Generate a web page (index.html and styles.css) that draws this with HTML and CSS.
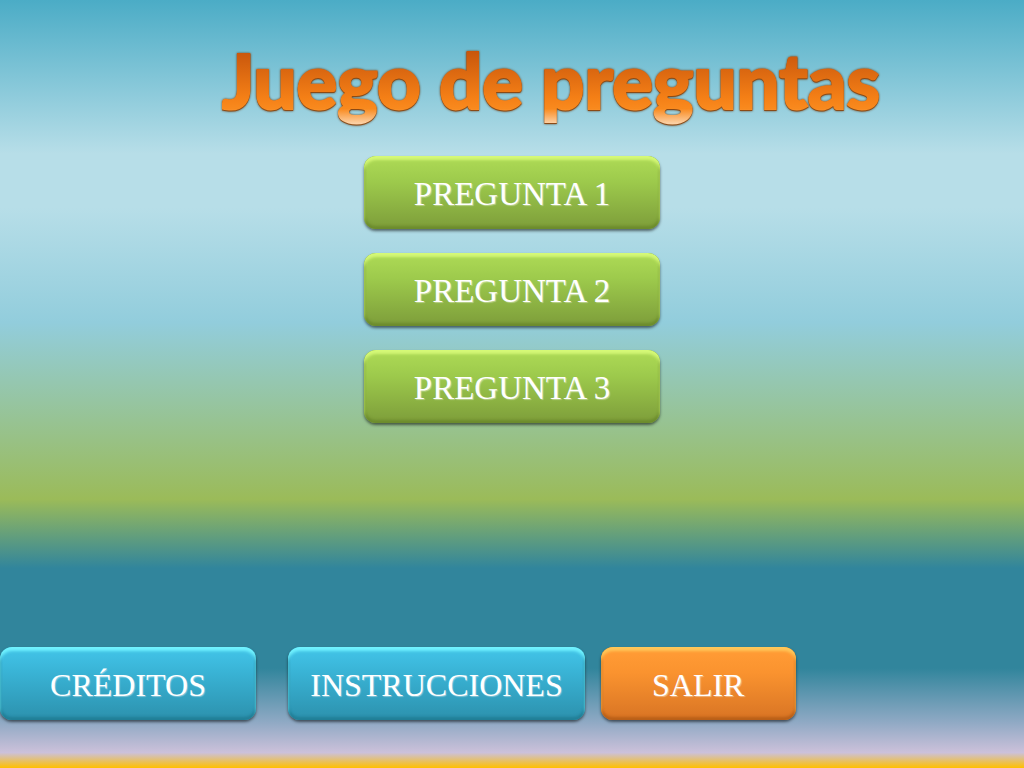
FILE: index.html
```html
<!DOCTYPE html>
<html lang="es">
<head>
    <meta charset="UTF-8">
    <meta name="viewport" content="width=device-width, initial-scale=1.0">
    <title>Juego de preguntas</title>
    <link rel="stylesheet" href="styles.css">
</head>
<body>
    <header>
        <h1 class="title">Juego de preguntas</h1>
    </header>

    <main class="questions">
        <button type="button" class="btn btn-green">PREGUNTA 1</button>
        <button type="button" class="btn btn-green">PREGUNTA 2</button>
        <button type="button" class="btn btn-green">PREGUNTA 3</button>
    </main>

    <footer class="menu">
        <button type="button" class="btn btn-blue credits">CRÉDITOS</button>
        <button type="button" class="btn btn-blue instructions">INSTRUCCIONES</button>
        <button type="button" class="btn btn-orange exit">SALIR</button>
    </footer>
</body>
</html>
```

FILE: styles.css
```css
* {
    box-sizing: border-box;
}
body {
    display: flex;
    flex-direction: column;
    min-height: 100vh;
    margin: 0;
    background: linear-gradient(
        #4bacc6 0%,
        #b7dee8 20%,
        #b7dee8 27%,
        #92cddc 42%,
        #9bbb59 65%,
        #31859c 74%,
        #31859c 87%,
        #8fa9c4 94%,
        #ccc1da 98%,
        #ffc000 100%
    );
}
header {
    padding: 32px 0 28px 78px;
    text-align: center;
}
.title {
    display: inline-block;
    margin: 0;
    font-family: Lato, "Open Sans", sans-serif;
    font-size: 76px;
    font-weight: 900;
    line-height: 96px;
    color: transparent;
    background: linear-gradient(#c8560c 20%, #f47f16 68%, #f98a1e 80%, #fcd0a4 95%);
    -webkit-background-clip: text;
    background-clip: text;
    -webkit-text-stroke: 2px transparent;
    filter: drop-shadow(0 1px 0 #8a4a16) drop-shadow(0 0 1px #6b4a2a);
}
.questions {
    display: flex;
    flex-direction: column;
    align-items: center;
    gap: 24px;
}
.questions .btn {
    width: 29%;
}
.btn {
    min-height: 73px;
    padding: 3px 8px 0;
    border: none;
    border-radius: 12px;
    color: #fff;
    font-family: "Liberation Serif", serif;
    font-size: 33px;
    text-shadow: 1px 1px 1px rgba(255, 255, 255, 0.4);
    cursor: pointer;
}
.btn-green {
    background: linear-gradient(#a9d653 10%, #9dca4c 35%, #7d9d3a);
    box-shadow: inset 0 4px 3px #d5f977, inset 0 -3px 3px #6c8c2d, inset 0 0 3px #668a2c, 0 2px 3px rgba(0, 0, 0, 0.55);
}
.btn-blue {
    background: linear-gradient(#40c0e4 10%, #39b3d5 35%, #2c91ad);
    box-shadow: inset 0 4px 3px #70f2ff, inset 0 -3px 3px #217f97, inset 0 0 3px #217f97, 0 2px 3px rgba(0, 0, 0, 0.55);
}
.btn-orange {
    background: linear-gradient(#ff9a34 10%, #fa932f 35%, #d87424);
    box-shadow: inset 0 4px 3px #ffc85a, inset 0 -3px 3px #b95f18, inset 0 0 3px #b95f18, 0 2px 3px rgba(0, 0, 0, 0.55);
}
.menu .btn {
    font-size: 32px;
}
.menu {
    display: flex;
    margin-top: auto;
    padding: 24px 0 48px;
}
.credits {
    width: 25%;
    margin-right: 32px;
}
.instructions {
    width: 29%;
    margin-right: 16px;
}
.exit {
    width: 19%;
}
```
